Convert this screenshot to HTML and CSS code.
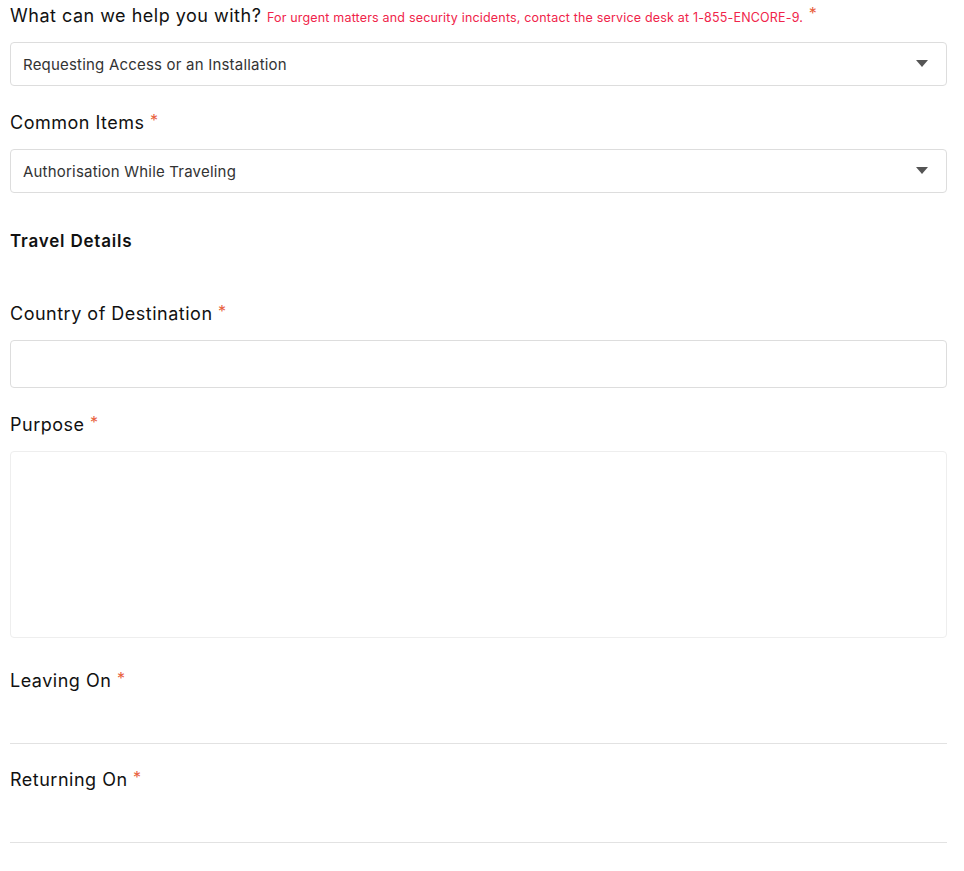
FILE: index.html
```html
<!DOCTYPE html>
<html>
<head>
  <link rel="stylesheet" href="styles.css">
</head>
<body>
  <form class="request-form">
    <div class="field">
      <label class="field-label">What can we help you with? <span class="urgent-note">For urgent matters and security incidents, contact the service desk at 1-855-ENCORE-9.</span> <span class="required">*</span></label>
      <div class="select-wrapper">
        <select>
          <option>Requesting Access or an Installation</option>
        </select>
      </div>
    </div>

    <div class="field">
      <label class="field-label">Common Items <span class="required">*</span></label>
      <div class="select-wrapper">
        <select>
          <option>Authorisation While Traveling</option>
        </select>
      </div>
    </div>

    <h4 class="section-title">Travel Details</h4>

    <div class="field">
      <label class="field-label">Country of Destination <span class="required">*</span></label>
      <input type="text" class="text-input">
    </div>

    <div class="field field-purpose">
      <label class="field-label">Purpose <span class="required">*</span></label>
      <textarea class="text-area"></textarea>
    </div>

    <div class="field field-date">
      <label class="field-label">Leaving On <span class="required">*</span></label>
      <div class="date-input"></div>
    </div>

    <div class="field field-date">
      <label class="field-label">Returning On <span class="required">*</span></label>
      <div class="date-input"></div>
    </div>
  </form>
</body>
</html>
```

FILE: styles.css
```css
body {
  margin: 0;
  font-family: Inter, "Noto Sans", sans-serif;
  background: #FFFFFF;
  color: #1A1A1A;
}

.request-form {
  width: 937px;
  padding: 2px 10px 0;
}

.field {
  margin-bottom: 23px;
}

.field-label {
  display: block;
  font-size: 18px;
  line-height: 28px;
  font-weight: 400;
  color: #111111;
  margin-bottom: 12px;
  letter-spacing: 0.5px;
}

.urgent-note {
  font-size: 12.5px;
  line-height: 1;
  color: #F0244A;
  letter-spacing: 0.18px;
}

.required {
  color: #E8603C;
  font-size: 16px;
  line-height: 1;
  vertical-align: top;
  position: relative;
  top: 3px;
}

.select-wrapper {
  position: relative;
}

.select-wrapper::after {
  content: "";
  position: absolute;
  right: 19px;
  top: 18px;
  border-left: 6px solid transparent;
  border-right: 6px solid transparent;
  border-top: 7px solid #555555;
  pointer-events: none;
}

select {
  display: block;
  width: 100%;
  height: 44px;
  padding: 0 12px;
  font-family: inherit;
  font-size: 15px;
  letter-spacing: 0.2px;
  color: #333333;
  border: 1px solid #DDDDDD;
  border-radius: 4px;
  background: #FFFFFF;
  appearance: none;
}

.section-title {
  margin: 36px 0 47px;
  font-size: 17px;
  line-height: 24px;
  font-weight: 600;
  letter-spacing: 0.8px;
  color: #111111;
}

.text-input {
  display: block;
  box-sizing: border-box;
  width: 100%;
  height: 48px;
  border: 1px solid #DDDDDD;
  border-radius: 4px;
}

.text-area {
  display: block;
  box-sizing: border-box;
  width: 100%;
  height: 187px;
  border: 1px solid #EEEEEE;
  border-radius: 4px;
  resize: none;
}

.field-purpose {
  margin-bottom: 29px;
}

.field-date {
  margin-bottom: 22px;
}

.field-date .field-label {
  margin-bottom: 0;
}

.date-input {
  height: 48px;
  border-bottom: 1px solid #E2E2E2;
}
```
